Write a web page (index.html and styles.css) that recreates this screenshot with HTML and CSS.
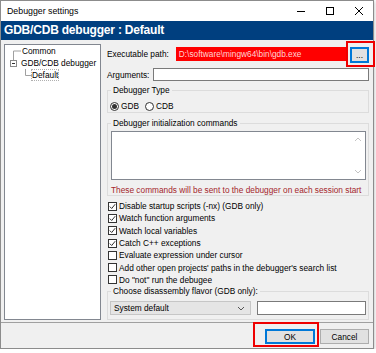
FILE: index.html
```html
<!DOCTYPE html>
<html lang="en">
<head>
    <meta charset="UTF-8">
    <meta name="viewport" content="width=device-width, initial-scale=1.0">
    <title>Debugger settings</title>
    <link rel="stylesheet" href="styles.css">
</head>
<body>
    <div class="window">
        <div class="titlebar">
            <span class="title">Debugger settings</span>
            <div class="controls">
                <span class="ctl"><svg width="10" height="10"><path d="M1 5.5H9" stroke="#000"/></svg></span>
                <span class="ctl"><svg width="10" height="10"><rect x="1.5" y="1.5" width="7" height="7" fill="none" stroke="#000"/></svg></span>
                <span class="ctl"><svg width="10" height="10"><path d="M1 1L9 9M9 1L1 9" stroke="#000"/></svg></span>
            </div>
        </div>
        <div class="header">GDB/CDB debugger : Default</div>

        <div class="main">
            <!-- tree of debugger configs -->
            <div class="tree">
                <div class="node">
                    <svg class="guide" width="17" height="12"><path d="M8.5 6H16M8.5 6V12" fill="none" stroke="#a0a0a0"/></svg>
                    <span>Common</span>
                </div>
                <div class="node">
                    <svg class="guide" width="16" height="12"><path d="M8.5 0V3" fill="none" stroke="#a0a0a0"/><rect x="5.5" y="3.5" width="6" height="6" fill="#fff" stroke="#8a8a8a"/><path d="M7 6.5H10" stroke="#333"/></svg>
                    <span>GDB/CDB debugger</span>
                </div>
                <div class="node">
                    <svg class="guide" width="27" height="12"><path d="M20.5 0V6.5H27" fill="none" stroke="#a0a0a0"/></svg>
                    <span class="selected">Default</span>
                </div>
            </div>

            <div class="pane">
                <div class="row exec-row">
                    <label>Executable path:</label>
                    <div class="field red">D:\software\mingw64\bin\gdb.exe</div>
                    <span class="mark browse-mark"><button class="btn focus browse">...</button></span>
                </div>
                <div class="row args-row">
                    <label>Arguments:</label>
                    <div class="field"></div>
                </div>

                <fieldset class="group">
                    <legend>Debugger Type</legend>
                    <div class="radios">
                        <span class="radio on"></span><span class="radio-label">GDB</span>
                        <span class="radio"></span><span class="radio-label">CDB</span>
                    </div>
                </fieldset>

                <fieldset class="group init-group">
                    <legend>Debugger initialization commands</legend>
                    <div class="textarea">
                        <div class="scroll">
                            <svg width="8" height="5"><path d="M1 4L4 1L7 4" fill="none" stroke="#c4c4c4"/></svg>
                            <svg width="8" height="5"><path d="M1 1L4 4L7 1" fill="none" stroke="#c4c4c4"/></svg>
                        </div>
                    </div>
                    <div class="note">These commands will be sent to the debugger on each session start</div>
                </fieldset>

                <div class="checks">
                    <div class="check on"><span class="box"><svg width="7" height="7"><path d="M0.8 3.6L2.7 5.5L6.2 1.2" fill="none" stroke="#333"/></svg></span>Disable startup scripts (-nx) (GDB only)</div>
                    <div class="check on"><span class="box"><svg width="7" height="7"><path d="M0.8 3.6L2.7 5.5L6.2 1.2" fill="none" stroke="#333"/></svg></span>Watch function arguments</div>
                    <div class="check on"><span class="box"><svg width="7" height="7"><path d="M0.8 3.6L2.7 5.5L6.2 1.2" fill="none" stroke="#333"/></svg></span>Watch local variables</div>
                    <div class="check on"><span class="box"><svg width="7" height="7"><path d="M0.8 3.6L2.7 5.5L6.2 1.2" fill="none" stroke="#333"/></svg></span>Catch C++ exceptions</div>
                    <div class="check"><span class="box"></span>Evaluate expression under cursor</div>
                    <div class="check"><span class="box"></span>Add other open projects' paths in the debugger's search list</div>
                    <div class="check"><span class="box"></span>Do "not" run the debugee</div>
                </div>

                <fieldset class="group flavor-group">
                    <legend>Choose disassembly flavor (GDB only):</legend>
                    <div class="flavor">
                        <div class="select">System default
                            <svg width="8" height="5"><path d="M1 1L4 4L7 1" fill="none" stroke="#555"/></svg>
                        </div>
                        <div class="field"></div>
                    </div>
                </fieldset>
            </div>
        </div>

        <div class="buttons">
            <span class="mark ok-mark"><button class="btn focus">OK</button></span>
            <button class="btn cancel">Cancel</button>
        </div>
    </div>
</body>
</html>
```

FILE: styles.css
```css
* {
    box-sizing: border-box;
}

body {
    margin: 0;
    background: #fff;
    font-family: "Liberation Sans", Arial, sans-serif;
    font-size: 8.3px;
    color: #000;
}

.window {
    width: 374px;
    height: 349px;
    border: 1px solid #8c8c8c;
    background: #f0f0f0;
    box-shadow: 0 1px 4px rgba(0, 0, 0, 0.3);
    display: flex;
    flex-direction: column;
}

.titlebar {
    height: 20px;
    background: #fff;
    display: flex;
    align-items: center;
    padding-left: 6px;
}

.title {
    font-size: 8.8px;
    flex: 1;
}

.controls {
    display: flex;
}

.ctl {
    width: 29px;
    height: 20px;
    display: flex;
    align-items: center;
    justify-content: center;
}

.header {
    height: 19px;
    background: #003f7f;
    color: #fff;
    font-weight: bold;
    font-size: 12px;
    letter-spacing: -0.2px;
    line-height: 19px;
    padding-left: 3px;
}

.main {
    flex: 1;
    display: flex;
    gap: 6px;
    padding: 4px 4px 2px 3px;
}

.tree {
    width: 97px;
    flex: none;
    background: #fff;
    border: 1px solid #828790;
}

.node {
    height: 12px;
    display: flex;
    align-items: center;
    line-height: 12px;
    white-space: nowrap;
}

.guide {
    flex: none;
}

.node .selected {
    outline: 1px dotted #b0b0b0;
    line-height: 10px;
}

.pane {
    width: 262px;
    flex: none;
    display: flex;
    flex-direction: column;
}

.row {
    display: flex;
    align-items: center;
    white-space: nowrap;
}

.exec-row {
    margin-top: 3px;
    height: 14px;
}

.exec-row label {
    margin-right: 7px;
}

.args-row {
    margin-top: 7px;
    height: 13px;
}

.args-row label {
    margin-right: 4px;
}

.field {
    flex: 1;
    height: 100%;
    background: #fff;
    border: 1px solid #7a7a7a;
    padding-left: 2px;
    line-height: 12px;
}

.field.red {
    background: #ff0000;
    border-color: #ff0000;
    color: #ffd4d4;
}

.mark {
    border: 2px solid #ee0000;
    display: flex;
}

.browse-mark {
    margin: -6px -6px -6px 0;
    padding: 4px 4px 2px 2px;
}

.btn {
    font-family: inherit;
    font-size: 8.3px;
    background: #e1e1e1;
    border: 1px solid #adadad;
    padding: 0;
    margin: 0;
    color: #000;
}

.btn.focus {
    border: 1px solid #0078d7;
    box-shadow: inset 0 0 0 1px #0078d7;
}

.browse {
    width: 19px;
    height: 16px;
    line-height: 10px;
}

.group {
    margin: 0;
    border: 1px solid #dcdcdc;
    padding: 0 2px;
    min-width: 0;
}

.group legend {
    padding: 0 2px;
    margin-left: 1px;
    line-height: 10px;
    height: 10px;
}

.group:first-of-type {
    margin-top: 4px;
}

.radios {
    margin-top: 5px;
    height: 12px;
    display: flex;
    align-items: center;
}

.radio {
    width: 9px;
    height: 9px;
    border: 1px solid #333;
    border-radius: 50%;
    background: #fff;
    display: flex;
    align-items: center;
    justify-content: center;
}

.radio.on::after {
    content: "";
    width: 5px;
    height: 5px;
    border-radius: 50%;
    background: #333;
}

.radio-label {
    margin: 0 6px 0 2px;
}

.init-group {
    margin-top: 5px;
}

.textarea {
    margin: 3px 0 0 1px;
    height: 49px;
    background: #fff;
    border: 1px solid #828790;
    display: flex;
    justify-content: flex-end;
}

.scroll {
    width: 14px;
    display: flex;
    flex-direction: column;
    justify-content: space-between;
    align-items: center;
    padding: 5px 0 5px;
}

.note {
    margin: 5px 0 0 1px;
    height: 10px;
    line-height: 10px;
    color: #a4262c;
    white-space: nowrap;
}

.checks {
    margin-top: 4px;
}

.check {
    height: 12.3px;
    display: flex;
    align-items: center;
    white-space: nowrap;
}

.box {
    width: 9px;
    height: 9px;
    border: 1px solid #333;
    background: #fff;
    margin: 0 2px 0 1px;
    flex: none;
    display: flex;
    align-items: center;
    justify-content: center;
}

.flavor-group {
    padding-bottom: 4px;
}

.flavor {
    margin-top: 5px;
    display: flex;
    gap: 6px;
    height: 14px;
}

.select {
    width: 141px;
    background: #e5e5e5;
    border: 1px solid #c6c6c6;
    display: flex;
    align-items: center;
    justify-content: space-between;
    padding: 0 5px 0 3px;
}

.buttons {
    height: 26px;
    border-top: 1px solid #a0a0a0;
    display: flex;
    justify-content: flex-end;
    align-items: flex-start;
    padding-right: 4px;
}

.ok-mark {
    margin-top: -1px;
    padding: 5px 2px 1px 10px;
}

.ok-mark .btn {
    width: 50px;
    height: 15px;
}

.cancel {
    margin: 6px 0 0 1px;
    width: 49px;
    height: 15px;
}
```
